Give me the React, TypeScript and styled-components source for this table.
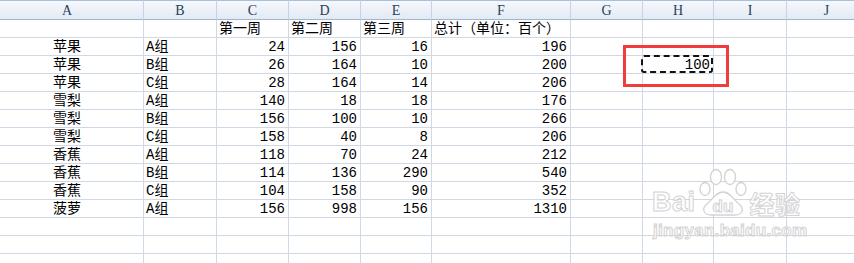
import React from "react";
import styled, { createGlobalStyle } from "styled-components";

const GlobalStyle = createGlobalStyle`
  html, body { margin: 0; padding: 0; background: #ffffff; }
  body { width: 854px; height: 263px; overflow: hidden; }
`;

const COLS = [144, 73, 72, 72, 71, 139, 72, 71, 73, 80];
const LETTERS = ["A", "B", "C", "D", "E", "F", "G", "H", "I", "J"];
const TOTAL_ROWS = 14;

type Cell = string | number | null;

const DATA: Cell[][] = [
  [null, null, "第一周", "第二周", "第三周", "总计（单位：百个）"],
  ["苹果", "A组", 24, 156, 16, 196],
  ["苹果", "B组", 26, 164, 10, 200],
  ["苹果", "C组", 28, 164, 14, 206],
  ["雪梨", "A组", 140, 18, 18, 176],
  ["雪梨", "B组", 156, 100, 10, 266],
  ["雪梨", "C组", 158, 40, 8, 206],
  ["香蕉", "A组", 118, 70, 24, 212],
  ["香蕉", "B组", 114, 136, 290, 540],
  ["香蕉", "C组", 104, 158, 90, 352],
  ["菠萝", "A组", 156, 998, 156, 1310],
];

const Sheet = styled.div`
  position: relative;
  width: 854px;
  height: 263px;
  overflow: hidden;
  background: #ffffff;
`;

const Grid = styled.div`
  display: grid;
  grid-template-columns: ${COLS.map((c) => c + "px").join(" ")};
  grid-template-rows: 20px repeat(${TOTAL_ROWS}, 18px);
`;

const HeaderCell = styled.div<{ $padRight?: number }>`
  box-sizing: border-box;
  height: 20px;
  border-top: 1px solid #a9c0dc;
  border-bottom: 1px solid #9eb6ce;
  border-right: 1px solid #c5d3e6;
  background: linear-gradient(#f5f8fc, #e3eaf4);
  color: #27415a;
  font-family: "Liberation Serif", "DejaVu Serif", serif;
  font-size: 14px;
  line-height: 19px;
  text-align: center;
  padding-right: ${(p) => p.$padRight ?? 0}px;
`;

type Align = "left" | "right" | "center";

const DataCell = styled.div<{ $align: Align; $padRight?: number }>`
  position: relative;
  box-sizing: border-box;
  height: 18px;
  border-right: 1px solid #d0d7e5;
  border-bottom: 1px solid #d0d7e5;
  font-family: "Liberation Mono", "Noto Sans CJK SC", monospace;
  font-size: 14px;
  line-height: 18px;
  color: #000000;
  white-space: nowrap;
  overflow: visible;
  text-align: ${(p) => p.$align};
  padding-left: ${(p) => (p.$align === "left" ? 2 : 0)}px;
  padding-right: ${(p) => p.$padRight ?? (p.$align === "right" ? 3 : 0)}px;
`;

const CopyMarquee = styled.div`
  position: absolute;
  left: -2px;
  top: -1px;
  right: 0px;
  bottom: 0px;
  border: 2px dashed #111111;
  border-radius: 3px;
  pointer-events: none;
`;

const Highlight = styled.div`
  position: absolute;
  left: 623px;
  top: 45px;
  width: 106px;
  height: 42px;
  box-sizing: border-box;
  border: 3px solid #f23b3b;
  pointer-events: none;
`;

const Watermark = styled.div`
  position: absolute;
  left: 652px;
  top: 168px;
  display: flex;
  flex-direction: column;
  align-items: flex-start;
  pointer-events: none;
  opacity: 0.9;
`;

const LogoRow = styled.div`
  display: flex;
  align-items: flex-end;
  height: 48px;
`;

const OutlineText = styled.span<{ $size: number; $cjk?: boolean }>`
  font-family: ${(p) =>
    p.$cjk
      ? '"Noto Sans CJK SC", sans-serif'
      : '"Liberation Sans", Arial, sans-serif'};
  font-weight: 700;
  font-size: ${(p) => p.$size}px;
  line-height: 1;
  color: #ffffff;
  -webkit-text-stroke: 1px #cfcfcf;
  letter-spacing: 0.5px;
`;

const UrlText = styled(OutlineText)`
  margin-top: 6px;
  margin-left: 1px;
  letter-spacing: 0.3px;
`;

const Paw = () => (
  <svg width="52" height="48" viewBox="0 0 52 48" style={{ margin: "0 1px 0 1px" }}>
    <g fill="#ffffff" stroke="#cfcfcf" strokeWidth="1.3">
      <ellipse cx="8" cy="21" rx="5" ry="6.5" />
      <ellipse cx="19" cy="9" rx="5.5" ry="7.5" />
      <ellipse cx="33" cy="9" rx="5.5" ry="7.5" />
      <ellipse cx="44" cy="21" rx="5" ry="6.5" />
      <path d="M26 24 C 19 24, 16 31, 10 36 C 4 41, 7 47, 14 47 L 38 47 C 45 47, 48 41, 42 36 C 36 31, 33 24, 26 24 Z" />
    </g>
    <text
      x="26"
      y="44"
      textAnchor="middle"
      fontFamily="Liberation Sans, Arial, sans-serif"
      fontWeight="700"
      fontSize="17"
      fill="#ffffff"
      stroke="#cfcfcf"
      strokeWidth="1"
    >
      du
    </text>
  </svg>
);

function renderCell(v: Cell, col: number) {
  if (v === null || v === undefined) return "";
  return String(v);
}

export default function App() {
  const rows: Cell[][] = [];
  for (let r = 0; r < TOTAL_ROWS; r++) {
    const base = DATA[r] ?? [];
    const row: Cell[] = [];
    for (let c = 0; c < COLS.length; c++) row.push(base[c] ?? null);
    rows.push(row);
  }
  rows[2][7] = 100;

  return (
    <>
      <GlobalStyle />
      <Sheet>
        <Grid>
          {LETTERS.map((l, i) => (
            <HeaderCell key={l} $padRight={i === 0 ? 9 : 0}>
              {l}
            </HeaderCell>
          ))}
          {rows.map((row, r) =>
            row.map((v, c) => {
              let align: Align = "left";
              if (typeof v === "number") align = "right";
              else if (c === 0) align = "center";
              const marquee = r === 2 && c === 7;
              return (
                <DataCell
                  key={`${r}-${c}`}
                  $align={align}
                  $padRight={c === 0 ? 9 : undefined}
                >
                  {renderCell(v, c)}
                  {marquee && <CopyMarquee />}
                </DataCell>
              );
            })
          )}
        </Grid>
        <Highlight />
        <Watermark>
          <LogoRow>
            <OutlineText $size={27}>Bai</OutlineText>
            <Paw />
            <OutlineText $size={25} $cjk>
              经验
            </OutlineText>
          </LogoRow>
          <UrlText $size={17}>jingyan.baidu.com</UrlText>
        </Watermark>
      </Sheet>
    </>
  );
}
